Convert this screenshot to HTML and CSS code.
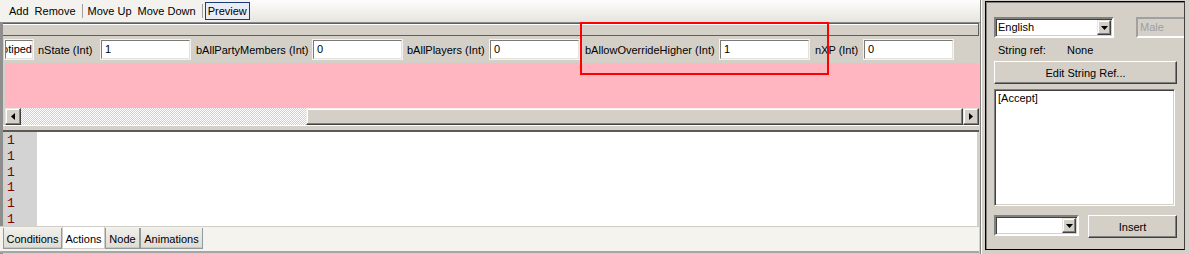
FILE: index.html
```html
<!doctype html>
<html lang="en">
    <head>
        <meta charset="UTF-8" />
        <title>Dialog Editor</title>
        <link rel="stylesheet" href="styles.css">
    </head>
    <body>
        <div class="app">
            <div class="main">
                <div class="toolbar">
                    <div class="tool-group">
                        <span class="tool">Add</span>
                        <span class="tool">Remove</span>
                        <span class="tool-sep"></span>
                        <span class="tool">Move Up</span>
                        <span class="tool">Move Down</span>
                        <span class="tool-sep"></span>
                        <span class="tool tool-on">Preview</span>
                    </div>
                </div>
                <div class="pane">
                    <div class="header-bar"></div>
                    <div class="fields">
                        <div class="field-input field-first">otiped</div>
                        <span class="field-label label-state">nState (Int)</span>
                        <div class="field-input">1</div>
                        <span class="field-label label-party">bAllPartyMembers (Int)</span>
                        <div class="field-input">0</div>
                        <span class="field-label label-players">bAllPlayers (Int)</span>
                        <div class="field-input">0</div>
                        <span class="field-label label-override">bAllowOverrideHigher (Int)</span>
                        <div class="field-input">1</div>
                        <span class="field-label label-xp">nXP (Int)</span>
                        <div class="field-input">0</div>
                    </div>
                    <div class="pink"></div>
                    <div class="hscroll">
                        <div class="scroll-btn">
                            <svg width="4" height="7" viewBox="0 0 4 7"><path d="M4 0 L0 3.5 L4 7 Z" fill="#000"/></svg>
                        </div>
                        <div class="scroll-track"></div>
                        <div class="scroll-thumb"></div>
                        <div class="scroll-btn">
                            <svg width="4" height="7" viewBox="0 0 4 7"><path d="M0 0 L4 3.5 L0 7 Z" fill="#000"/></svg>
                        </div>
                    </div>
                    <div class="splitter"></div>
                    <div class="editor">
                        <div class="gutter">
                            <div>1</div>
                            <div>1</div>
                            <div>1</div>
                            <div>1</div>
                            <div>1</div>
                            <div>1</div>
                        </div>
                        <div class="code"></div>
                    </div>
                    <div class="tabs">
                        <span class="tab tab-cond">Conditions</span>
                        <span class="tab tab-on">Actions</span>
                        <span class="tab tab-node">Node</span>
                        <span class="tab tab-anim">Animations</span>
                    </div>
                </div>
                <div class="highlight"></div>
            </div>
            <div class="side">
                <div class="side-box">
                    <div class="side-row">
                        <div class="combo combo-lang">
                            <span class="combo-text">English</span>
                            <span class="combo-btn">
                                <svg width="7" height="4" viewBox="0 0 7 4"><path d="M0 0 H7 L3.5 4 Z" fill="#000"/></svg>
                            </span>
                        </div>
                        <div class="gender">Male</div>
                    </div>
                    <div class="strref">
                        <span class="strref-label">String ref:</span>
                        <span>None</span>
                    </div>
                    <div class="button btn-edit">Edit String Ref...</div>
                    <div class="textbox">[Accept]</div>
                    <div class="side-row side-bottom">
                        <div class="combo combo-tok">
                            <span class="combo-text"></span>
                            <span class="combo-btn">
                                <svg width="7" height="4" viewBox="0 0 7 4"><path d="M0 0 H7 L3.5 4 Z" fill="#000"/></svg>
                            </span>
                        </div>
                        <div class="button btn-insert">Insert</div>
                    </div>
                </div>
            </div>
        </div>
    </body>
</html>
```

FILE: styles.css
```css
body {
    margin: 0;
    background: #d4d0c8;
    font-family: "Liberation Sans", Arial, sans-serif;
    font-size: 11px;
    color: #000;
}

.app {
    display: flex;
    width: 1189px;
    height: 254px;
    overflow: hidden;
}

/* left pane */

.main {
    position: relative;
    flex: 0 0 980px;
    display: flex;
    flex-direction: column;
    border-right: 1px solid #808080;
}

.toolbar {
    height: 22px;
    background: linear-gradient(#fdfdfc, #e6e4df);
    border-bottom: 1px solid #8a8a8a;
    display: flex;
    align-items: center;
}

.tool-group {
    display: flex;
    align-items: center;
    height: 22px;
    padding-left: 6px;
    background: #f3f2ee;
}

.tool {
    padding: 2px 2px;
    border: 1px solid transparent;
}

.tool-on {
    border-color: #1e3c74;
    background: #e8ecf4;
}

.tool-sep {
    width: 1px;
    height: 14px;
    background: #a0a0a0;
    margin: 0 2px 0 3px;
}

.pane {
    flex: 1;
    display: flex;
    flex-direction: column;
    border-left: 3px solid #8e8e8e;
    padding-left: 2px;
    padding-right: 1px;
}

.header-bar {
    height: 11px;
    margin-left: -2px;
    background: #d4d0c8;
    border: 1px solid #5f5f5f;
    border-left: none;
    box-shadow: inset 0 1px #ffffff;
}

.fields {
    height: 27px;
    display: flex;
    align-items: center;
    white-space: nowrap;
}

.field-input {
    flex: none;
    width: 84px;
    height: 17px;
    line-height: 17px;
    padding-left: 3px;
    background: #fff;
    border: 1px solid;
    border-color: #7a7a7a #e4e2dc #e4e2dc #7a7a7a;
    box-shadow: 0 0 0 1px #f4f3ef;
    overflow: hidden;
}

.field-first {
    width: 25px;
    padding-left: 1px;
    direction: rtl;
    text-align: left;
}

.field-label {
    flex: none;
    margin-left: 5px;
}

.label-state {
    width: 63px;
}

.label-party {
    width: 117px;
    margin-left: 6px;
}

.label-players {
    width: 83px;
}

.label-override {
    width: 135px;
    margin-left: 6px;
}

.label-xp {
    width: 49px;
    margin-left: 6px;
}

.pink {
    height: 45px;
    background: #ffb6c1;
}

.hscroll {
    height: 17px;
    display: flex;
}

.scroll-btn {
    width: 14px;
    height: 15px;
    background: #d4d0c8;
    border: 1px solid;
    border-color: #e8e6e1 #404040 #404040 #e8e6e1;
    box-shadow: inset -1px -1px #808080, inset 1px 1px #fff;
    display: flex;
    align-items: center;
    justify-content: center;
}

.scroll-track {
    width: 285px;
    background: repeating-conic-gradient(#ffffff 0 25%, #d4d0c8 0 50%) 0 0 / 2px 2px;
}

.scroll-thumb {
    flex: 1;
    background: #d4d0c8;
    border: 1px solid;
    border-color: #f0efeb #404040 #404040 #f0efeb;
    box-shadow: inset -1px -1px #808080, inset 1px 1px #fff;
}

.splitter {
    height: 5px;
    margin-left: -2px;
    background: #d4d0c8;
    border-bottom: 2px solid #5a5a5a;
    box-shadow: inset 0 1px #fff;
}

.editor {
    height: 94px;
    display: flex;
    background: #fff;
}

.gutter {
    width: 30px;
    background: #d3d3d3;
    color: #800000;
    font-family: "Liberation Mono", "Courier New", monospace;
    font-size: 13px;
    line-height: 15.8px;
    padding: 1px 0 0 2px;
    overflow: hidden;
}

.code {
    flex: 1;
    border-right: 2px solid #d4d0c8;
}

.tabs {
    height: 24px;
    margin-left: -5px;
    padding-left: 3px;
    display: flex;
    align-items: flex-start;
    background: #f4f3ee;
    border-top: 1px solid #cfcdc6;
    border-bottom: 2px solid #a6a6a6;
}

.tab {
    box-sizing: border-box;
    height: 21px;
    padding-top: 1px;
    margin-top: 1px;
    display: flex;
    align-items: center;
    justify-content: center;
    border: 1px solid #919b9c;
    border-top: none;
    background: linear-gradient(#f0efea, #dedcd5);
    box-shadow: inset 0 -1px #c8c6bd;
}

.tab-cond {
    width: 59px;
}

.tab-node {
    width: 35px;
}

.tab-anim {
    width: 63px;
}

.tab-on {
    width: 43px;
    height: 22px;
    margin-top: 0;
    padding-top: 2px;
    background: #fff;
    border-color: #cfcdc6;
    box-shadow: none;
}

.highlight {
    position: absolute;
    left: 580px;
    top: 22px;
    width: 245px;
    height: 49px;
    border: 2px solid #ff0000;
}

/* right pane */

.side {
    flex: 1;
    min-width: 0;
    overflow: hidden;
    padding: 1px 4px 4px 3px;
    border-left: 1px solid #ffffff;
}

.side-box {
    height: 100%;
    box-sizing: border-box;
    border: 1px solid #000;
    border-right: 1px solid #404040;
    padding: 15px 0 0 8px;
    box-shadow: inset 1px 1px #808080;
    overflow: hidden;
}

.side-row {
    display: flex;
    align-items: flex-start;
}

.combo {
    flex: none;
    height: 17px;
    background: #fff;
    border: 2px solid;
    border-color: #808080 #fff #fff #808080;
    box-shadow: inset 1px 1px #404040, inset -1px -1px #d4d0c8;
    display: flex;
    justify-content: space-between;
}

.combo-lang {
    width: 116px;
}

.combo-tok {
    width: 81px;
}

.combo-text {
    line-height: 17px;
    padding-left: 2px;
}

.combo-btn {
    width: 14px;
    height: 15px;
    margin: 1px 1px 0 0;
    box-sizing: border-box;
    background: #d4d0c8;
    border: 1px solid;
    border-color: #e8e6e1 #404040 #404040 #e8e6e1;
    box-shadow: inset -1px -1px #808080, inset 1px 1px #fff;
    display: flex;
    align-items: center;
    justify-content: center;
}

.gender {
    flex: none;
    margin-left: 22px;
    width: 60px;
    height: 17px;
    line-height: 17px;
    padding-left: 2px;
    color: #a0a0a0;
    border: 2px solid;
    border-color: #a0a0a0 #fff #fff #a0a0a0;
}

.strref {
    margin: 6px 0 0 4px;
    height: 14px;
    display: flex;
}

.strref-label {
    width: 69px;
}

.button {
    flex: none;
    box-sizing: border-box;
    background: #d4d0c8;
    border: 1px solid;
    border-color: #fff #404040 #404040 #fff;
    box-shadow: inset -1px -1px #808080;
    display: flex;
    align-items: center;
    justify-content: center;
}

.btn-edit {
    width: 183px;
    height: 23px;
    margin-top: 3px;
}

.textbox {
    width: 176px;
    height: 114px;
    margin-top: 5px;
    padding: 1px 0 0 3px;
    background: #fff;
    border: 1px solid;
    border-color: #808080 #fff #fff #808080;
    box-shadow: inset 1px 1px #404040, inset -1px -1px #d4d0c8;
    line-height: 14px;
}

.side-bottom {
    margin-top: 9px;
}

.btn-insert {
    width: 89px;
    height: 23px;
    margin-left: 9px;
}
```
